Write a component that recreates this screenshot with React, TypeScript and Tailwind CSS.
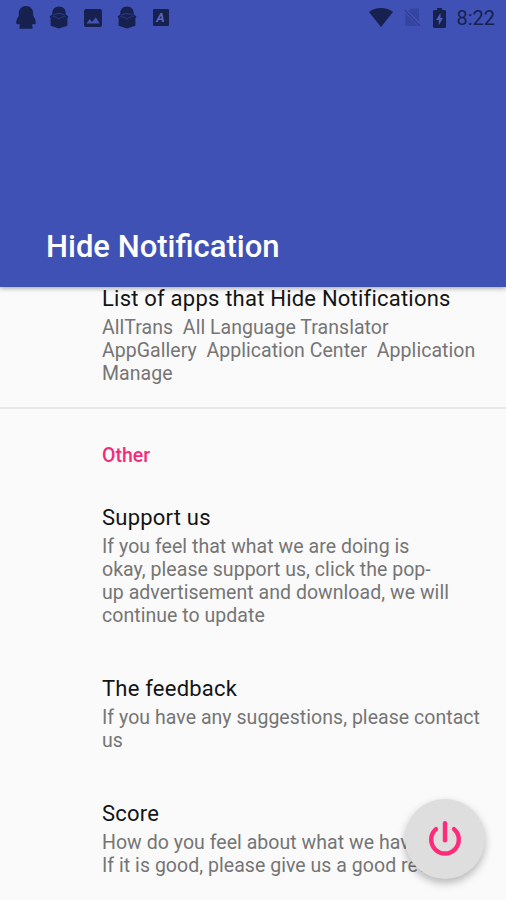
import React from "react";

const settings = [
  {
    title: "Support us",
    lines: [
      "If you feel that what we are doing is",
      "okay, please support us, click the pop-",
      "up advertisement and download, we will",
      "continue to update",
    ],
  },
  {
    title: "The feedback",
    lines: ["If you have any suggestions, please contact", "us"],
  },
  {
    title: "Score",
    lines: [
      "How do you feel about what we have done?",
      "If it is good, please give us a good review",
    ],
  },
];

function PenguinIcon() {
  return (
    <svg width="20" height="23" viewBox="0 0 20 23" fill="#17214f">
      <path d="M10 0C5.600 0 2.800 3.200 2.800 7.500v2.300C1.300 12 .2 14.300.2 16.500c0 2 .8 2.300 2.900 1.300l1 2.200c-.6.600-.8 1.100-.8 1.600 0 .8.500 1.200 1.300 1.200h10.800c.8 0 1.300-.4 1.300-1.200 0-.5-.2-1-.8-1.600l1-2.200c2.100 1 2.900.7 2.900-1.300 0-2.200-1.100-4.500-2.600-6.700V7.500C17.200 3.200 14.400 0 10 0z" />
    </svg>
  );
}

function ReaderIcon() {
  return (
    <svg width="20" height="23" viewBox="0 0 20 23" fill="#17214f">
      <path d="M10 .6c-3.900 0-6.700 2.800-6.700 6.400v1.200L.6 10.600l1 1.700v7.500L10 22.600l8.400-2.800v-7.500l1-1.700-2.700-2.400V7c0-3.600-2.800-6.400-6.700-6.400z" />
      <path d="M4.200 9.300C5.300 8.300 7.500 7.700 10 7.700s4.700.6 5.800 1.600" fill="none" stroke="#2d3d94" strokeWidth="1" />
      <path d="M3.500 10.400c2.500.1 4.800 1.200 6.500 2.600 1.700-1.400 4-2.500 6.500-2.600" fill="none" stroke="#2d3d94" strokeWidth=".8" />
    </svg>
  );
}

function ImageIcon() {
  return (
    <svg width="18" height="18" viewBox="0 0 18 18">
      <rect width="18" height="18" rx="2" fill="#17214f" />
      <path d="M2.500 14.500l3.200-4.500 2.500 3 3.600-4.800 3.900 6.300z" fill="#4153b3" />
    </svg>
  );
}

function LetterIcon() {
  return (
    <svg width="16" height="17" viewBox="0 0 16 17">
      <rect width="16" height="17" rx="1" fill="#17214f" />
      <text
        x="7.500"
        y="13"
        textAnchor="middle"
        fontSize="13"
        fontWeight="700"
        fontStyle="italic"
        fontFamily="Roboto, sans-serif"
        fill="#5567c4"
      >
        A
      </text>
    </svg>
  );
}

function StatusBar() {
  return (
    <div className="flex h-[35px] items-center text-[#17214f]">
      <div className="flex items-center pl-4">
        <PenguinIcon />
        <div className="ml-[13px]">
          <ReaderIcon />
        </div>
        <div className="ml-[15px]">
          <ImageIcon />
        </div>
        <div className="ml-[15px]">
          <ReaderIcon />
        </div>
        <div className="ml-4">
          <LetterIcon />
        </div>
      </div>
      <div className="ml-auto flex items-center pr-[11px]">
        <svg width="24" height="19" viewBox="0 0 24 19" fill="#17214f">
          <path d="M12 19L0 4C3.400 1.300 7.500 0 12 0s8.600 1.300 12 4z" />
        </svg>
        <svg className="ml-[11px]" width="17" height="19" viewBox="0 0 17 19">
          <path d="M7 .5h7c.6 0 1 .4 1 1v12.300L4.300 3.100zM1.300 5.200L14 17.900H1.300z" fill="#34459f" />
          <path d="M.5 1.800l15.300 16" stroke="#2c3b8e" strokeWidth="1.200" />
        </svg>
        <svg className="ml-[12px]" width="13" height="20" viewBox="0 0 13 20">
          <path d="M4 0h5v2h2.500c.8 0 1.500.7 1.500 1.500v15c0 .8-.7 1.500-1.500 1.500h-10C.7 20 0 19.300 0 18.500v-15C0 2.700.7 2 1.500 2H4z" fill="#17214f" />
          <path d="M7.500 5L3 12h2.800v5.200L10 10H7.500z" fill="#4b5dbd" />
        </svg>
        <span className="ml-[10px] pt-px text-[20px] leading-none">8:22</span>
      </div>
    </div>
  );
}

function Preference({ title, lines }: { title: string; lines: string[] }) {
  return (
    <div className="pl-[102px] whitespace-pre">
      <div className="text-[22px] leading-7 tracking-[0.22px] text-[#141414]">{title}</div>
      <div className="mt-[3px] text-[19.500px] leading-[23px] tracking-[0.04px] text-[#757575]">
        {lines.map((line) => (
          <div key={line}>{line}</div>
        ))}
      </div>
    </div>
  );
}

export default function App() {
  return (
    <div className="relative h-[900px] w-[506px] overflow-hidden bg-[#fafafa] font-['Roboto',sans-serif]">
      <header className="relative z-10 flex h-[287px] flex-col justify-between bg-[#3f51b5] shadow-[0_1px_5px_rgba(0,0,0,0.4)]">
        <StatusBar />
        <h1 className="pb-5 pl-[46px] text-[31px] leading-10 font-medium text-white">
          Hide Notification
        </h1>
      </header>

      <main>
        <section className="-mt-[2px] h-[124px] border-b-2 border-[#e8e8e8]">
          <Preference
            title="List of apps that Hide Notifications"
            lines={[
              "AllTrans  All Language Translator",
              "AppGallery  Application Center  Application",
              "Manage",
            ]}
          />
        </section>

        <section className="pt-[35px]">
          <h2 className="pl-[102px] text-[19.500px] leading-6 font-medium text-[#f52a78]">Other</h2>
          <div className="mt-9 flex flex-col gap-12">
            {settings.map((item) => (
              <Preference key={item.title} title={item.title} lines={item.lines} />
            ))}
          </div>
        </section>
      </main>

      {/* Floating power button */}
      <button
        aria-label="Power"
        className="absolute right-[21px] bottom-[21px] z-20 flex size-20 items-center justify-center rounded-full bg-[#dedede] shadow-[0_4px_8px_rgba(0,0,0,0.28)]"
      >
        <svg width="40" height="40" viewBox="0 0 40 40" fill="none" stroke="#ff2b78" strokeWidth="4.400" strokeLinecap="round">
          <path d="M20 4.300v17" />
          <path d="M11 10.200a13.800 13.800 0 1 0 18 0" />
        </svg>
      </button>
    </div>
  );
}
